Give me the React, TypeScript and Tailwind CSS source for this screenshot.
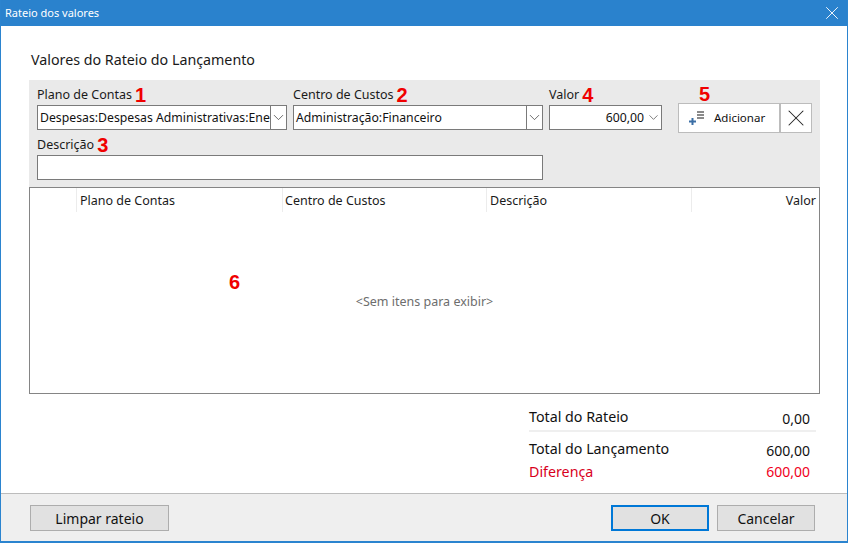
import { ChevronDown, X } from "lucide-react";

const font = { fontFamily: '"Noto Sans", "Open Sans", sans-serif' };

function Mark({ children }: { children: string }) {
  return <span className="ml-[3px] font-['Liberation_Sans'] text-[20px] leading-[20px] font-bold text-[#f00000]">{children}</span>;
}

function Label({ text, mark }: { text: string; mark: string }) {
  return (
    <div className="flex h-[20px] items-center text-[12.5px] text-[#1a1a1a]">
      {text}
      <Mark>{mark}</Mark>
    </div>
  );
}

function Combo({ value, className }: { value: string; className: string }) {
  return (
    <div className={`flex h-[25px] items-center border border-[#7a7a7a] bg-white ${className}`}>
      <div className="min-w-0 flex-1 overflow-hidden pt-[2px] pl-[2px] text-[12.25px] whitespace-nowrap text-[#111]">{value}</div>
      <div className="flex h-full w-[16px] items-center justify-center border-l border-[#7a7a7a]">
        <ChevronDown size={17} strokeWidth={1.1} className="shrink-0 text-[#444]" />
      </div>
    </div>
  );
}

function FooterButton({ label, className }: { label: string; className: string }) {
  return <button className={`h-[26px] bg-[#e1e1e1] text-[14px] text-[#111] ${className}`}>{label}</button>;
}

function TotalRow({ label, value, red, drop }: { label: string; value: string; red?: boolean; drop?: boolean }) {
  return (
    <div className={`flex h-[21px] items-center justify-between pr-[6px] text-[14.25px] ${red ? "text-[#d8001c]" : "text-[#111]"}`}>
      <span className={drop ? "mb-[2px]" : ""}>{label}</span>
      <span className={`text-[14px] ${drop ? "mt-[2px]" : ""} ${red ? "text-[#f0001c]" : ""}`}>{value}</span>
    </div>
  );
}

export default function App() {
  return (
    <div style={font} className="flex h-[543px] w-[848px] flex-col overflow-hidden border-x border-b-2 border-[#2b84cf] bg-white">
      <div className="-mx-px flex h-[26px] shrink-0 items-center justify-between bg-[#2a82cd] pr-[5px] pl-[5px] text-[11px] text-white">
        <span>Rateio dos valores</span>
        <X size={22} strokeWidth={1} />
      </div>

      <div className="relative flex-1 pt-[23px] pl-[28px]">
        <h1 className="pl-[2px] text-[14.25px] leading-[22px] font-normal text-[#1a1a1a]">Valores do Rateio do Lançamento</h1>

        <div className="mt-[9px] h-[107px] w-[791px] bg-[#eaeaea] pt-[5px] pl-[8px]">
          <div className="flex items-start">
            <div>
              <Label text="Plano de Contas" mark="1" />
              <Combo value="Despesas:Despesas Administrativas:Energia" className="w-[250px]" />
            </div>
            <div className="ml-[6px]">
              <Label text="Centro de Custos" mark="2" />
              <Combo value="Administração:Financeiro" className="w-[250px]" />
            </div>
            <div className="ml-[6px]">
              <Label text="Valor" mark="4" />
              <div className="flex h-[25px] w-[113px] items-center justify-end border border-[#7a7a7a] bg-white text-[12.25px] text-[#111]">
                <span className="pt-[1px]">600,00</span>
                <ChevronDown size={15} strokeWidth={1.1} className="ml-[2px] text-[#444]" />
              </div>
            </div>
            <div className="ml-[16px]">
              <div className="flex h-[18px] items-center pl-[18px]">
                <Mark>5</Mark>
              </div>
              <div className="flex h-[30px] w-[134px]">
                <button className="flex w-[102px] items-center border border-[#bcbcbc] bg-white pl-[10px] text-[11.5px] text-[#111]">
                  <svg width="18" height="16" viewBox="0 0 18 16" className="mr-[7px]">
                    <path d="M0 11.5h7M3.5 8v7" stroke="#3a6ea5" strokeWidth="2" />
                    <path d="M8 2h7M8 5h7M8 8h7" stroke="#8a8a8a" strokeWidth="2" />
                  </svg>
                  Adicionar
                </button>
                <button className="flex w-[32px] items-center justify-center border border-[#bcbcbc] bg-white text-[#222]">
                  <X size={28} strokeWidth={0.9} className="shrink-0" />
                </button>
              </div>
            </div>
          </div>
          <div className="mt-[2px]">
            <Label text="Descrição" mark="3" />
            <div className="h-[25px] w-[506px] border border-[#7a7a7a] bg-white" />
          </div>
        </div>

        <div className="relative flex h-[207px] w-[791px] flex-col border border-[#858585] bg-white">
          <div className="grid h-[24px] grid-cols-[46px_206px_204px_205px_1fr] items-center text-[12.5px] text-[#1a1a1a]">
            <div className="h-full" />
            <div className="flex h-full items-center border-l border-[#ececec] pt-[2px] pl-[3px]">Plano de Contas</div>
            <div className="flex h-full items-center border-l border-[#ececec] pt-[2px] pl-[2px]">Centro de Custos</div>
            <div className="flex h-full items-center border-l border-[#ececec] pt-[2px] pl-[3px]">Descrição</div>
            <div className="flex h-full items-center justify-end border-l border-[#ececec] pt-[2px] pr-[3px]">Valor</div>
          </div>
          <div className="flex flex-1 items-center justify-center text-[12.5px] text-[#6d6d6d]">&lt;Sem itens para exibir&gt;</div>
          <span className="absolute top-[84px] left-[199px] font-['Liberation_Sans'] text-[20px] leading-[20px] font-bold text-[#f00000]">6</span>
        </div>

        <div className="mt-[13px] ml-[500px] w-[287px]">
          <TotalRow label="Total do Rateio" value="0,00" drop />
          <div className="mt-[2px] mb-[7px] h-[2px] bg-[#efefef]" />
          <TotalRow label="Total do Lançamento" value="600,00" drop />
          <div className="h-[1px]" />
          <TotalRow label="Diferença" value="600,00" red />
        </div>
      </div>

      <div className="flex h-[48px] shrink-0 items-start justify-between border-t border-[#bcbcbc] bg-[#efefef] pt-[11px] pr-[32px] pl-[29px]">
        <FooterButton label="Limpar rateio" className="w-[139px] border border-[#adadad]" />
        <div className="flex gap-[8px]">
          <FooterButton label="OK" className="w-[98px] border-2 border-[#0078d7]" />
          <FooterButton label="Cancelar" className="w-[98px] border border-[#adadad]" />
        </div>
      </div>
    </div>
  );
}
